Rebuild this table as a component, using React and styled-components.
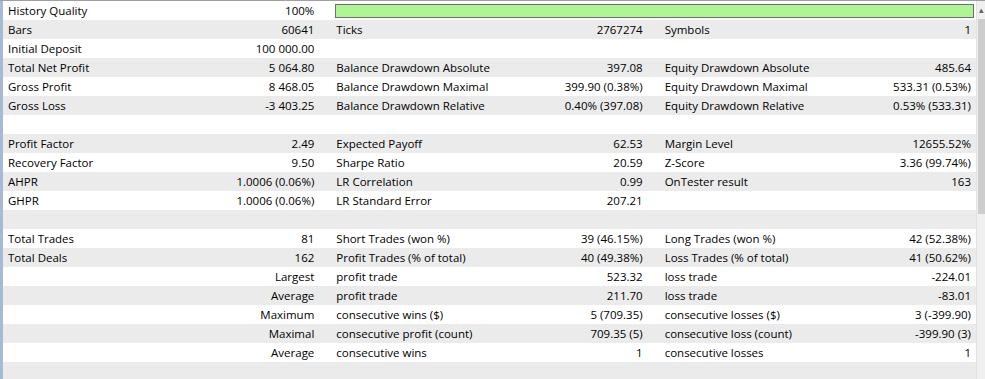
import React from "react";
import styled, { createGlobalStyle } from "styled-components";

const Global = createGlobalStyle`
  html, body { margin: 0; padding: 0; background: #fff; }
  body {
    font-family: "Segoe UI", "Open Sans", "Noto Sans", sans-serif;
    font-size: 11.5px;
    color: #000;
  }
`;

const Window = styled.div`
  display: flex;
  width: 985px;
  height: 379px;
  overflow: hidden;
  border-top: 1px solid #a0a0a0;
  box-sizing: border-box;
`;

const Table = styled.div`
  flex: 1;
  display: flex;
  flex-direction: column;
  border-left: 3px solid #a7bad5;
  min-width: 0;
`;

const Row = styled.div`
  display: grid;
  grid-template-columns: 1fr 1fr 1fr;
  column-gap: 22px;
  padding: 0 5px;
  height: 19px;
  flex: none;
  align-items: center;
  background: ${(p) => (p.$striped ? "#ebebeb" : "#fff")};
`;

const Cell = styled.div`
  display: flex;
  justify-content: space-between;
  align-items: center;
  white-space: nowrap;
  line-height: 19px;
`;

const Label = styled.span``;

const Value = styled.span`
  text-align: right;
`;

const QualityBar = styled.div`
  grid-column: 2 / 4;
  height: 14px;
  margin: 0 -3px 0 -1px;
  box-sizing: border-box;
  border: 1px solid #6f6f6f;
  background: #aef596;
`;

const Scrollbar = styled.div`
  width: 8px;
  flex: none;
  display: flex;
  flex-direction: column;
  background: #f0f0f0;
  border-left: 1px solid #e2e2e2;
`;

const ScrollArrow = styled.div`
  height: 18px;
  flex: none;
  color: #606060;
  font-size: 9px;
  line-height: 18px;
  padding-left: 2px;
`;

const ScrollThumb = styled.div`
  height: 195px;
  flex: none;
  background: #cdcdcd;
  margin-left: 1px;
`;

const rows = [
  [["History Quality", "100%"], "quality"],
  [["Bars", "60641"], ["Ticks", "2767274"], ["Symbols", "1"]],
  [["Initial Deposit", "100 000.00"], null, null],
  [["Total Net Profit", "5 064.80"], ["Balance Drawdown Absolute", "397.08"], ["Equity Drawdown Absolute", "485.64"]],
  [["Gross Profit", "8 468.05"], ["Balance Drawdown Maximal", "399.90 (0.38%)"], ["Equity Drawdown Maximal", "533.31 (0.53%)"]],
  [["Gross Loss", "-3 403.25"], ["Balance Drawdown Relative", "0.40% (397.08)"], ["Equity Drawdown Relative", "0.53% (533.31)"]],
  [null, null, null],
  [["Profit Factor", "2.49"], ["Expected Payoff", "62.53"], ["Margin Level", "12655.52%"]],
  [["Recovery Factor", "9.50"], ["Sharpe Ratio", "20.59"], ["Z-Score", "3.36 (99.74%)"]],
  [["AHPR", "1.0006 (0.06%)"], ["LR Correlation", "0.99"], ["OnTester result", "163"]],
  [["GHPR", "1.0006 (0.06%)"], ["LR Standard Error", "207.21"], null],
  [null, null, null],
  [["Total Trades", "81"], ["Short Trades (won %)", "39 (46.15%)"], ["Long Trades (won %)", "42 (52.38%)"]],
  [["Total Deals", "162"], ["Profit Trades (% of total)", "40 (49.38%)"], ["Loss Trades (% of total)", "41 (50.62%)"]],
  [["", "Largest"], ["profit trade", "523.32"], ["loss trade", "-224.01"]],
  [["", "Average"], ["profit trade", "211.70"], ["loss trade", "-83.01"]],
  [["", "Maximum"], ["consecutive wins ($)", "5 (709.35)"], ["consecutive losses ($)", "3 (-399.90)"]],
  [["", "Maximal"], ["consecutive profit (count)", "709.35 (5)"], ["consecutive loss (count)", "-399.90 (3)"]],
  [["", "Average"], ["consecutive wins", "1"], ["consecutive losses", "1"]],
  [null, null, null],
];

const Stat = ({ item }) => (
  <Cell>
    <Label>{item ? item[0] : ""}</Label>
    <Value>{item ? item[1] : ""}</Value>
  </Cell>
);

export default function App() {
  return (
    <>
      <Global />
      <Window>
        <Table>
          {rows.map((r, i) => (
            <Row key={i} $striped={i % 2 === 1}>
              <Stat item={r[0]} />
              {r[1] === "quality" ? (
                <QualityBar />
              ) : (
                <>
                  <Stat item={r[1]} />
                  <Stat item={r[2]} />
                </>
              )}
            </Row>
          ))}
        </Table>
        <Scrollbar>
          <ScrollArrow>▴</ScrollArrow>
          <ScrollThumb />
        </Scrollbar>
      </Window>
    </>
  );
}
